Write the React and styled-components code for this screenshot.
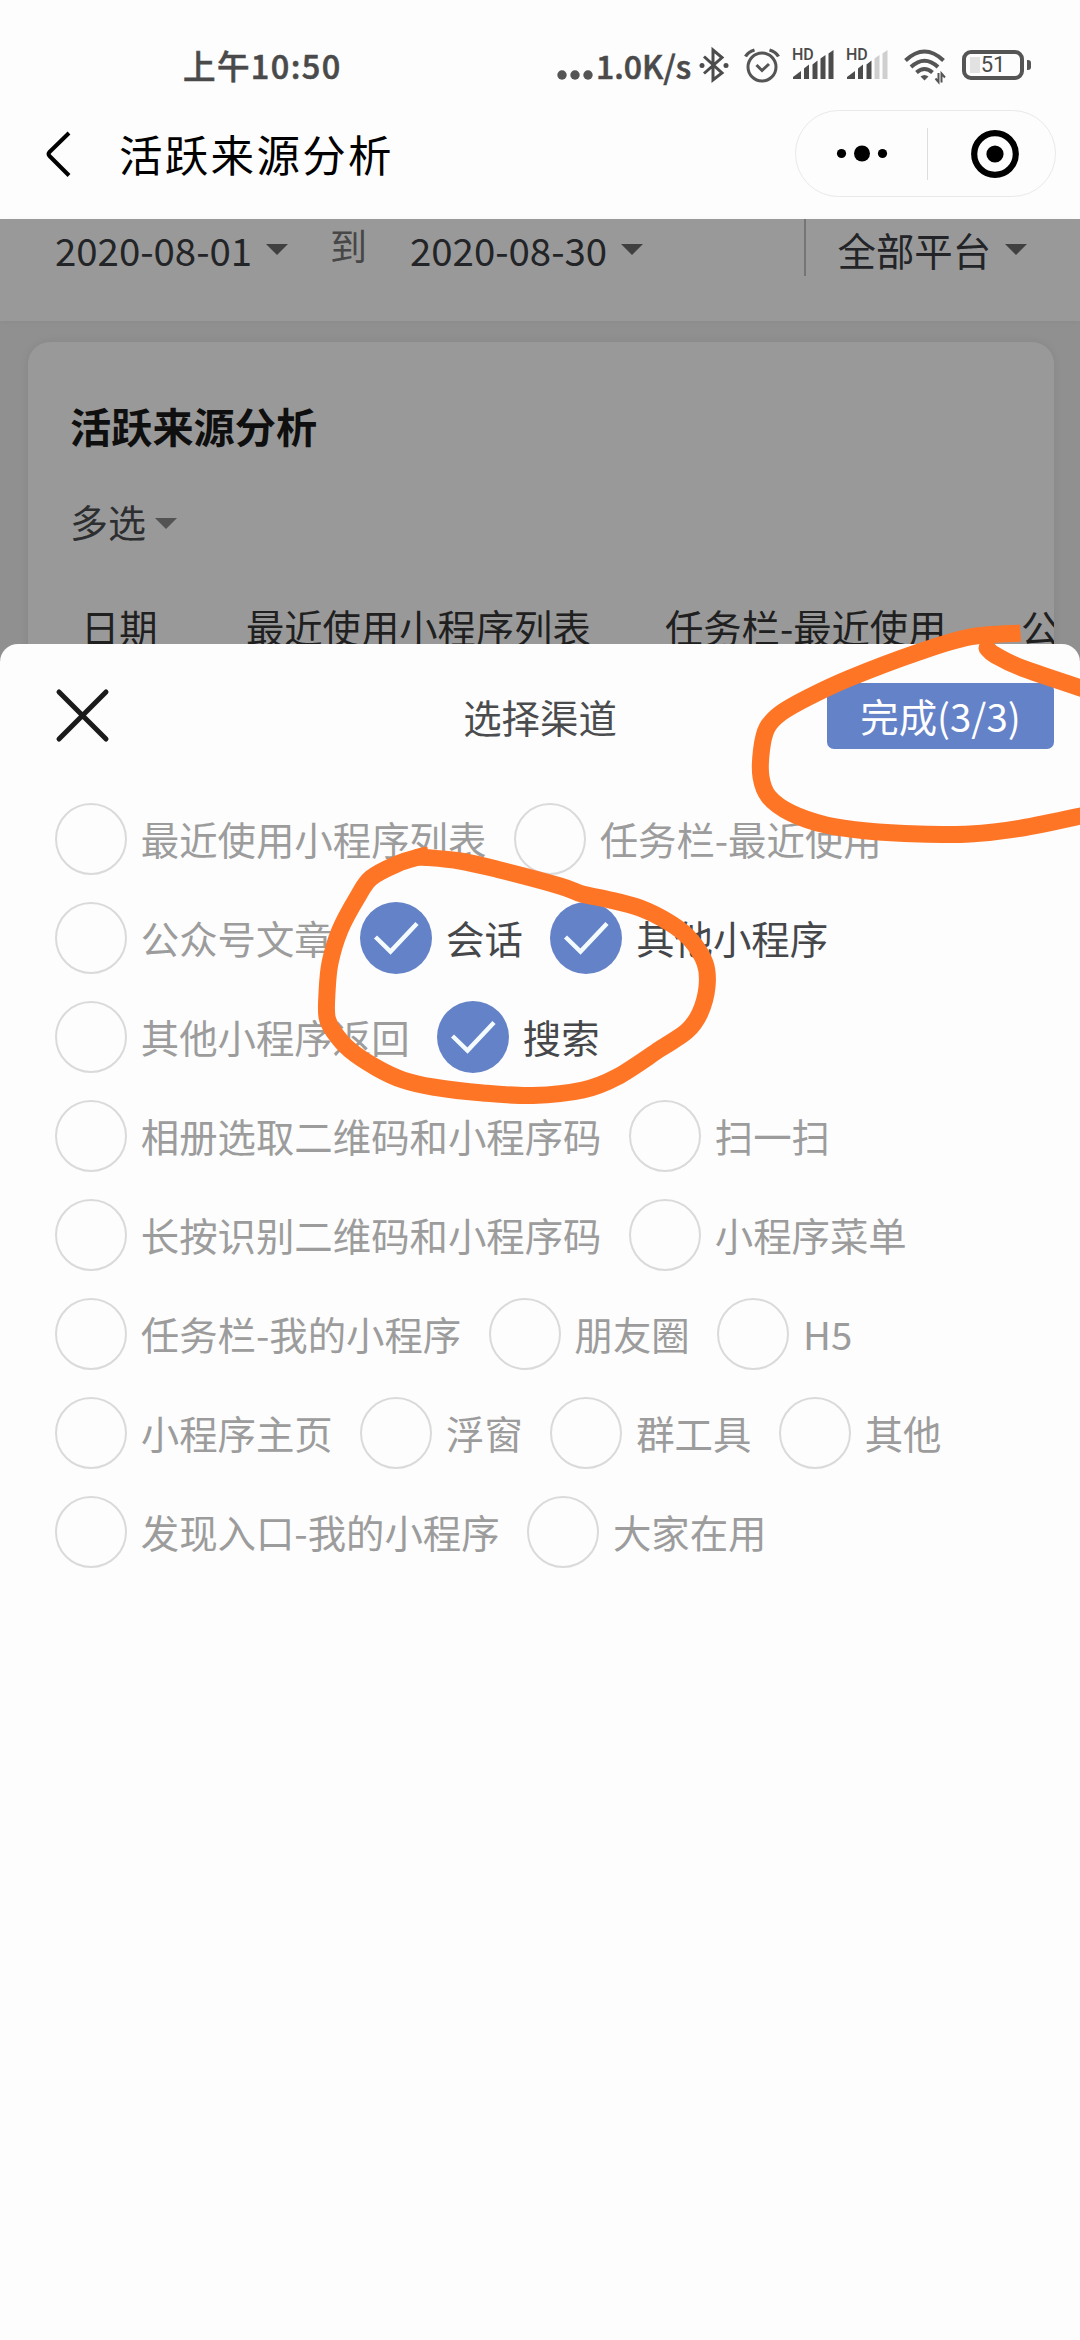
import React from "react";
import styled, { createGlobalStyle } from "styled-components";

const GlobalStyle = createGlobalStyle`
  *, *::before, *::after { box-sizing: border-box; }
  body {
    margin: 0;
    background: #fdfdfd;
    font-family: "Noto Sans CJK SC", "Noto Sans", sans-serif;
  }
  svg { display: block; flex: none; overflow: visible; }
`;

const Screen = styled.div`
  position: relative;
  display: flex;
  flex-direction: column;
  width: 1080px;
  height: 2340px;
  overflow: hidden;
  background: #fdfdfd;
`;

/* ---------- status bar ---------- */

const StatusBar = styled.div`
  display: flex;
  justify-content: space-between;
  align-items: center;
  height: 88px;
  padding: 42px 56px 0 183px;
  color: #4a4a4a;
`;

const Clock = styled.div`
  font-size: 32.5px;
  font-weight: 500;
  line-height: 46px;
  letter-spacing: 1.4px;
  -webkit-text-stroke: 0.6px #4a4a4a;
`;

const StatusIcons = styled.div`
  display: flex;
  align-items: center;
  height: 46px;
`;

const Speed = styled.span`
  width: 92px;
  margin: 0 11px 0 3px;
  font-size: 32px;
  font-weight: 500;
  line-height: 46px;
  white-space: nowrap;
  -webkit-text-stroke: 0.6px #4a4a4a;
`;

const Slot = styled.div`
  margin-right: ${(p) => p.$after}px;
`;

const SignalBox = styled.div`
  position: relative;
  width: 41px;
  height: 30px;
  margin-right: ${(p) => p.$after}px;
`;

const HdTag = styled.span`
  position: absolute;
  top: -4px;
  left: -1px;
  font-family: Roboto, sans-serif;
  font-size: 16px;
  font-weight: 500;
  line-height: 18px;
`;

const Battery = styled.div`
  position: relative;
  display: flex;
  align-items: center;
  justify-content: center;
  width: 62px;
  height: 30px;
  border: 4px solid #555;
  border-radius: 9px;
  background: linear-gradient(#e2e2e2, #e2e2e2) 4px 3px / 10px 16px no-repeat;
  font-family: Roboto, sans-serif;
  font-size: 22px;
  line-height: 22px;

  &::after {
    content: "";
    position: absolute;
    right: -11px;
    top: 6px;
    width: 4px;
    height: 10px;
    border-radius: 0 3px 3px 0;
    background: #555;
  }
`;

/* ---------- navigation bar ---------- */

const NavBar = styled.div`
  display: flex;
  align-items: center;
  height: 131px;
  padding: 0 24px 0 45px;
`;

const NavTitle = styled.h1`
  flex: 1;
  margin: 0 0 0 47px;
  font-size: 43.5px;
  font-weight: 400;
  line-height: 60px;
  letter-spacing: 2.3px;
  color: #000;
`;

const Capsule = styled.div`
  display: flex;
  align-items: center;
  width: 261px;
  height: 87px;
  border: 1px solid #e9e9e9;
  border-radius: 44px;
`;

const CapsuleHalf = styled.div`
  flex: 0 0 130.5px;
  display: flex;
  justify-content: center;
  align-items: center;
  height: 52px;
  padding-left: 2px;

  & + & {
    border-left: 1px solid #ddd;
    padding-left: 6px;
  }
`;

/* ---------- dimmed page ---------- */

const PageBody = styled.div`
  position: relative;
  display: flex;
  flex-direction: column;
  height: 2121px;
  background: #f1f1f1;
`;

const FilterBar = styled.div`
  display: flex;
  align-items: flex-start;
  height: 102px;
  padding-left: 55px;
  background: #fff;
  box-shadow: 0 2px 8px rgba(0, 0, 0, 0.04);
  font-size: 38.4px;
  line-height: 56px;
  color: #3a3c41;
`;

const Picker = styled.div`
  display: flex;
  align-items: center;
  gap: 14px;
  margin-top: 2px;
  width: ${(p) => p.$width}px;
`;

const Caret = styled.i`
  width: 0;
  height: 0;
  border: solid transparent;
  border-width: 11.5px 11px 0;
  border-top-color: ${(p) => p.$color || "#6c6c6c"};
  margin-top: ${(p) => p.$drop || 0}px;
`;

const ToLabel = styled.span`
  width: 80px;
  margin-top: -2px;
  font-size: 37px;
  color: #777;
`;

const Divider = styled.i`
  width: 1.5px;
  height: 57px;
  margin-right: 32px;
  background: #c4c4c4;
`;

const Card = styled.section`
  width: 1026px;
  height: 700px;
  margin: 21px 0 0 28px;
  padding: 53px 0 0 42px;
  overflow: hidden;
  border-radius: 22px;
  background: #fff;
  box-shadow: 0 0 12px rgba(0, 0, 0, 0.08);
`;

const CardTitle = styled.h2`
  margin: 0;
  font-size: 41.2px;
  font-weight: 700;
  line-height: 60px;
  color: #1a1a1a;
`;

const MultiSelect = styled.div`
  display: flex;
  align-items: center;
  gap: 9px;
  margin-top: 38px;
  font-size: 38px;
  line-height: 56px;
  color: #4b4d50;
`;

const TableHead = styled.div`
  display: flex;
  margin: 50px 0 0 11px;
  font-size: 38.3px;
  line-height: 56px;
  white-space: nowrap;
  color: #363636;
`;

const HeadCell = styled.span`
  flex: none;
  width: ${(p) => p.$width}px;
`;

const Mask = styled.div`
  position: absolute;
  inset: 0;
  background: rgba(0, 0, 0, 0.4);
`;

/* ---------- bottom sheet ---------- */

const Sheet = styled.section`
  position: absolute;
  left: 0;
  right: 0;
  bottom: 0;
  height: 1696px;
  border-radius: 18px 18px 0 0;
  background: #fdfdfd;
`;

const SheetHeader = styled.header`
  display: grid;
  grid-template-columns: 1fr auto 1fr;
  align-items: center;
  height: 144px;
  padding: 0 26px 0 56px;
`;

const SheetTitle = styled.h3`
  margin: -1px 0 0 -30px;
  font-size: 38.4px;
  font-weight: 400;
  line-height: 56px;
  color: #4a4c4e;
`;

const DoneButton = styled.button`
  justify-self: end;
  width: 227px;
  height: 66px;
  padding: 0 0 2px;
  border: 0;
  border-radius: 7px;
  background: #6482c8;
  color: #fff;
  font: 400 38.4px/60px "Noto Sans CJK SC", sans-serif;
`;

const ChannelList = styled.ul`
  display: flex;
  flex-wrap: wrap;
  gap: 27px 27.5px;
  margin: 15px 0 0;
  padding: 0 40px 0 55px;
  list-style: none;
`;

const Channel = styled.li`
  display: flex;
  align-items: center;
  gap: 13.8px;
  height: 72px;
  font-size: 38.4px;
  line-height: 56px;
  white-space: nowrap;
  color: ${(p) => (p.$checked ? "#45474a" : "#9c9c9c")};
`;

const Radio = styled.span`
  display: flex;
  align-items: center;
  justify-content: center;
  width: 72px;
  height: 72px;
  border: ${(p) => (p.$checked ? "0" : "2.6px solid #dadada")};
  border-radius: 50%;
  background: ${(p) => (p.$checked ? "#6482c8" : "transparent")};
`;

const ChannelName = styled.span`
  padding-bottom: 3px;
`;

const Annotation = styled.svg`
  position: absolute;
  inset: 0;
  pointer-events: none;
`;

/* ---------- drawings ---------- */

const Ellipsis = () => (
  <svg width="36" height="30" fill="#555">
    <circle cx="5" cy="25" r="4.7" />
    <circle cx="18" cy="25" r="4.7" />
    <circle cx="31" cy="25" r="4.7" />
  </svg>
);

const Bluetooth = () => (
  <svg width="30" height="34" fill="none" stroke="#4c4c4c" strokeWidth="3">
    <path d="M5 8.5 L23 25 L14 32 V2 L23 9.5 L5 25.5" strokeLinejoin="miter" />
    <circle cx="3" cy="17.5" r="2.5" fill="#4c4c4c" stroke="none" />
    <circle cx="27" cy="17.5" r="2.5" fill="#4c4c4c" stroke="none" />
  </svg>
);

const Alarm = () => (
  <svg width="36" height="34" fill="none" stroke="#555" strokeWidth="3">
    <circle cx="18" cy="19" r="14" />
    <path d="M12.5 17 L18 22.5 L25 16" />
    <path d="M1.5 8.5 Q4 4 10.5 2 M34.5 8.5 Q32 4 25.5 2" strokeWidth="3.4" />
  </svg>
);

const BAR_SHAPES = [
  "M0 29 V27 L8 21 V29 Z",
  "M11 29 V18.5 L16 14.5 V29 Z",
  "M19.5 29 V14.5 L24.5 10.5 V29 Z",
  "M27.5 29 V8.5 L32.5 5 V29 Z",
  "M35.5 29 V3.5 L40.5 0 V29 Z",
];

const Signal = ({ level, after }) => (
  <SignalBox $after={after}>
    <svg width="41" height="30">
      {BAR_SHAPES.map((d, i) => (
        <path key={d} d={d} fill={i < level ? "#4c4c4c" : "#cfcfcf"} />
      ))}
    </svg>
    <HdTag>HD</HdTag>
  </SignalBox>
);

const Wifi = () => (
  <svg width="42" height="33" fill="none" stroke="#555" strokeWidth="4">
    <path d="M1.5 11.5 Q20.5 -6.5 39.5 11.5" />
    <path d="M7 18 Q20.5 5.5 34 18" />
    <path d="M12.5 23.5 Q20.5 16.5 28.5 23.5" />
    <path d="M16.5 27.5 Q20.5 24.5 24.5 27.5 L20.5 31.5 Z" fill="#555" stroke="none" />
    <path d="M34.5 24 V33 L31.5 29.5 M37.5 33.5 V24.5 L41 28.5" strokeWidth="2" />
  </svg>
);

const BackIcon = () => (
  <svg width="27" height="46" fill="none" stroke="#000" strokeWidth="4">
    <path d="M24 2 L4.5 21 Q2.5 23 4.5 25 L24 44.5" />
  </svg>
);

const MoreIcon = () => (
  <svg width="50" height="18" fill="#000">
    <circle cx="4.5" cy="8.5" r="4.6" />
    <circle cx="25" cy="8.5" r="8" />
    <circle cx="45.5" cy="8.5" r="4.6" />
  </svg>
);

const TargetIcon = () => (
  <svg width="48" height="48">
    <circle cx="24" cy="24" r="20.8" fill="none" stroke="#000" strokeWidth="6.2" />
    <circle cx="24" cy="24" r="8.6" fill="#000" />
  </svg>
);

const CloseIcon = () => (
  <svg width="54" height="54" stroke="#1b1b1b" strokeWidth="5" strokeLinecap="round">
    <path d="M3 3 L50 50 M50 3 L3 50" />
  </svg>
);

const CheckIcon = () => (
  <svg width="44" height="34" fill="none" stroke="#f4fbff" strokeWidth="4.4">
    <path d="M1.5 16 L16.500 30.500 L43 2.500" />
  </svg>
);

/* Smooth curve through a list of points. */
const curve = (pts) =>
  pts.slice(0, -1).reduce((d, p, i) => {
    const before = pts[i - 1] || p;
    const next = pts[i + 1];
    const after = pts[i + 2] || next;
    const c1 = [p[0] + (next[0] - before[0]) / 6, p[1] + (next[1] - before[1]) / 6];
    const c2 = [next[0] - (after[0] - p[0]) / 6, next[1] - (after[1] - p[1]) / 6];
    return `${d} C${c1} ${c2} ${next}`;
  }, `M${pts[0]}`);

const CHECKED_LOOP = [
  [429, 855], [419, 857], [397, 864], [371, 878], [357, 898], [340, 930], [330, 963],
  [327, 993], [327, 1017], [334, 1032], [350, 1050], [377, 1068], [403, 1080],
  [433, 1087], [483, 1093], [533, 1095.5], [583, 1090], [617, 1077], [660, 1049],
  [687, 1031], [700, 1013], [707, 987], [705, 963], [690, 939], [670, 923],
  [640, 908], [606, 899], [582, 894], [560, 886], [500, 870], [460, 861], [421, 857],
];
const DONE_LOOP = [
  [1020.5, 633], [970, 637], [919, 652], [850, 678], [809, 697], [781, 713],
  [767, 728], [761.5, 750], [761, 777], [769, 797], [791, 813], [826, 825],
  [867, 831], [919, 834], [970, 834], [1022, 828], [1090, 814],
];
const DONE_TAIL = [[987, 648], [995, 655], [1022, 668], [1090, 691]];

const CHANNELS = [
  ["最近使用小程序列表"],
  ["任务栏-最近使用"],
  ["公众号文章"],
  ["会话", true],
  ["其他小程序", true],
  ["其他小程序返回"],
  ["搜索", true],
  ["相册选取二维码和小程序码"],
  ["扫一扫"],
  ["长按识别二维码和小程序码"],
  ["小程序菜单"],
  ["任务栏-我的小程序"],
  ["朋友圈"],
  ["H5"],
  ["小程序主页"],
  ["浮窗"],
  ["群工具"],
  ["其他"],
  ["发现入口-我的小程序"],
  ["大家在用"],
];

export default function App() {
  return (
    <Screen>
      <GlobalStyle />
      <StatusBar>
        <Clock>上午10:50</Clock>
        <StatusIcons>
          <Ellipsis />
          <Speed>1.0K/s</Speed>
          <Slot $after={15}><Bluetooth /></Slot>
          <Slot $after={13}><Alarm /></Slot>
          <Signal level={5} after={13} />
          <Signal level={3} after={16} />
          <Slot $after={16}><Wifi /></Slot>
          <Battery>51</Battery>
        </StatusIcons>
      </StatusBar>
      <NavBar>
        <BackIcon />
        <NavTitle>活跃来源分析</NavTitle>
        <Capsule>
          <CapsuleHalf><MoreIcon /></CapsuleHalf>
          <CapsuleHalf><TargetIcon /></CapsuleHalf>
        </Capsule>
      </NavBar>

      <PageBody>
        <FilterBar>
          <Picker $width={275}>2020-08-01<Caret /></Picker>
          <ToLabel>到</ToLabel>
          <Picker $width={394}>2020-08-30<Caret /></Picker>
          <Divider />
          <Picker $width={200}>全部平台<Caret /></Picker>
        </FilterBar>
        <Card>
          <CardTitle>活跃来源分析</CardTitle>
          <MultiSelect>多选<Caret $color="#8a8a8a" $drop={5} /></MultiSelect>
          <TableHead>
            <HeadCell $width={165}>日期</HeadCell>
            <HeadCell $width={419}>最近使用小程序列表</HeadCell>
            <HeadCell $width={356}>任务栏-最近使用</HeadCell>
            <HeadCell $width={40}>公</HeadCell>
          </TableHead>
        </Card>
        <Mask />
      </PageBody>

      <Sheet>
        <SheetHeader>
          <CloseIcon />
          <SheetTitle>选择渠道</SheetTitle>
          <DoneButton>完成(3/3)</DoneButton>
        </SheetHeader>
        <ChannelList>
          {CHANNELS.map(([name, checked]) => (
            <Channel key={name} $checked={checked}>
              <Radio $checked={checked}>{checked && <CheckIcon />}</Radio>
              <ChannelName>{name}</ChannelName>
            </Channel>
          ))}
        </ChannelList>
      </Sheet>

      <Annotation width="1080" height="2340" fill="none" stroke="#ff7526" strokeWidth="17">
        <path d={curve(DONE_LOOP)} />
        <path d={curve(DONE_TAIL)} strokeLinecap="round" />
        <path d={curve(CHECKED_LOOP)} />
      </Annotation>
    </Screen>
  );
}
